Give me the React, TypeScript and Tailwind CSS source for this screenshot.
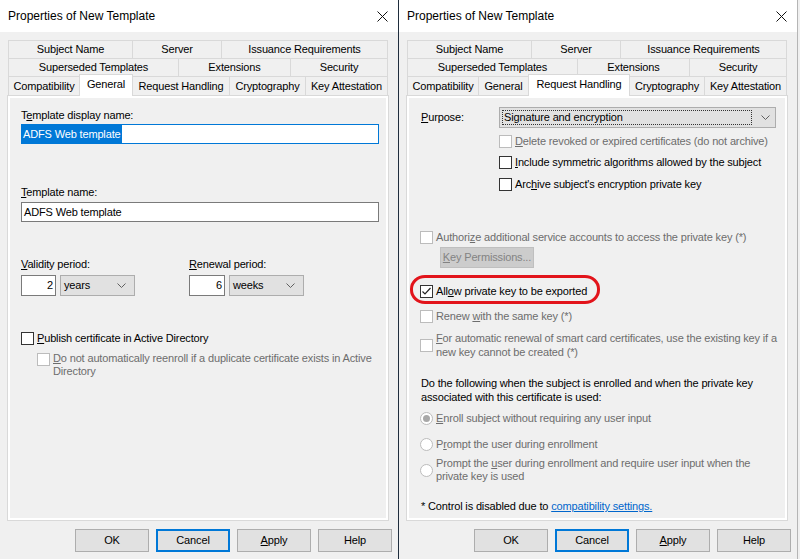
import type { ReactNode } from "react";

type Tab = { label: string; w: string; active?: boolean };

const ROW1: Tab[] = [
  { label: "Subject Name", w: "w-[124px]" },
  { label: "Server", w: "w-[89px]" },
  { label: "Issuance Requirements", w: "w-[167px]" },
];

const ROW2: Tab[] = [
  { label: "Superseded Templates", w: "w-[170px]" },
  { label: "Extensions", w: "w-[112px]" },
  { label: "Security", w: "w-[98px]" },
];

const ROW3_GENERAL: Tab[] = [
  { label: "Compatibility", w: "w-[71px]" },
  { label: "General", w: "w-[54px]", active: true },
  { label: "Request Handling", w: "w-[96px]" },
  { label: "Cryptography", w: "w-[76px]" },
  { label: "Key Attestation", w: "w-[83px]" },
];

const ROW3_REQUEST: Tab[] = [
  { label: "Compatibility", w: "w-[71px]" },
  { label: "General", w: "w-[50px]" },
  { label: "Request Handling", w: "w-[102px]", active: true },
  { label: "Cryptography", w: "w-[74px]" },
  { label: "Key Attestation", w: "w-[83px]" },
];

function TabRow({ tabs, last }: { tabs: Tab[]; last?: boolean }) {
  return (
    <div className={`ml-[8px] flex w-[380px] ${last ? "h-[19px] items-end" : "h-[18px]"}`}>
      {tabs.map((t, i) => {
        const afterActive = i > 0 && tabs[i - 1].active;
        if (t.active) {
          return (
            <div
              key={t.label}
              className={`${t.w} relative z-10 -mb-px flex h-[22px] shrink-0 items-center justify-center border-x border-t border-[#d9d9d9] bg-white pb-[2px]`}
            >
              {t.label}
            </div>
          );
        }
        return (
          <div
            key={t.label}
            className={`${t.w} flex h-full shrink-0 items-center justify-center border-t border-[#d9d9d9] bg-[#f0f0f0] ${
              afterActive ? "" : "border-l"
            } ${i === tabs.length - 1 ? "border-r" : ""}`}
          >
            {t.label}
          </div>
        );
      })}
    </div>
  );
}

function Check({ checked, disabled }: { checked?: boolean; disabled?: boolean }) {
  return (
    <span
      className={`flex h-[13px] w-[13px] shrink-0 items-center justify-center border bg-white ${
        disabled ? "border-[#bcbcbc]" : "border-[#333333]"
      }`}
    >
      {checked && (
        <svg width="11" height="11" viewBox="0 0 11 11">
          <polyline points="1.5,5.5 4,8 9.5,2" fill="none" stroke="#222" strokeWidth="1.2" />
        </svg>
      )}
    </span>
  );
}

function Radio({ checked, disabled }: { checked?: boolean; disabled?: boolean }) {
  return (
    <span
      className={`flex h-[13px] w-[13px] shrink-0 items-center justify-center rounded-full border bg-white ${
        disabled ? "border-[#bcbcbc]" : "border-[#333333]"
      }`}
    >
      {checked && <span className="h-[7px] w-[7px] rounded-full bg-[#a8a8a8]" />}
    </span>
  );
}

function Chevron() {
  return (
    <svg width="9" height="5" viewBox="0 0 9 5" className="shrink-0">
      <polyline points="0.5,0.5 4.5,4.5 8.5,0.5" fill="none" stroke="#606060" strokeWidth="1" />
    </svg>
  );
}

function Dropdown({ value, w }: { value: string; w: string }) {
  return (
    <div className={`${w} flex h-[21px] items-center justify-between border border-[#adadad] bg-[#e1e1e1] pl-[3px] pr-[8px]`}>
      <span>{value}</span>
      <Chevron />
    </div>
  );
}

function Dialog({ tab, children }: { tab: "general" | "request"; children: ReactNode }) {
  return (
    <div className="flex h-full w-[398px] shrink-0 flex-col bg-[#f0f0f0]">
      <div className="flex h-[32px] items-center justify-between bg-white pl-[8px] pr-[10px] text-[12px] tracking-normal">
        <span>Properties of New Template</span>
        <svg width="11" height="11" viewBox="0 0 11 11">
          <path d="M0.5 0.5L10.5 10.5M10.5 0.5L0.5 10.5" stroke="#111" strokeWidth="1" />
        </svg>
      </div>
      <div className="pt-[8px]">
        <TabRow tabs={ROW1} />
        <TabRow tabs={ROW2} />
        <TabRow tabs={tab === "general" ? ROW3_GENERAL : ROW3_REQUEST} last />
        <div className="ml-[7px] h-[426px] w-[382px] border border-[#d9d9d9] bg-white p-[2px]">
          <div className="flex h-full flex-col bg-[#f0f0f0] pl-[11px]">{children}</div>
        </div>
      </div>
      <div className="ml-[75px] mt-[8px] flex gap-[7px]">
        <button className="h-[23px] w-[74px] border border-[#adadad] bg-[#e1e1e1]">OK</button>
        <button className="h-[23px] w-[74px] border-2 border-[#0078d7] bg-[#e1e1e1]">Cancel</button>
        <button className="h-[23px] w-[74px] border border-[#adadad] bg-[#e1e1e1]">
          <u>A</u>pply
        </button>
        <button className="h-[23px] w-[74px] border border-[#adadad] bg-[#e1e1e1]">Help</button>
      </div>
    </div>
  );
}

function GeneralPage() {
  return (
    <>
      <div className="mt-[10px] h-[15px]">
        T<u>e</u>mplate display name:
      </div>
      <div className="mt-[1px] flex h-[20px] w-[358px] items-center border border-[#0078d7] bg-white">
        <span className="flex h-full items-center bg-[#0078d7] px-[1px] text-white">ADFS Web template</span>
      </div>
      <div className="mt-[41px] h-[15px]">
        <u>T</u>emplate name:
      </div>
      <div className="mt-[2px] flex h-[20px] w-[358px] items-center border border-[#7a7a7a] bg-white pl-[2px]">
        ADFS Web template
      </div>
      <div className="mt-[35px] flex">
        <div className="w-[168px]">
          <div className="h-[15px]">
            <u>V</u>alidity period:
          </div>
          <div className="mt-[3px] flex gap-[4px]">
            <div className="flex h-[21px] w-[35px] items-center justify-end border border-[#7a7a7a] bg-white pr-[2px]">2</div>
            <Dropdown value="years" w="w-[75px]" />
          </div>
        </div>
        <div>
          <div className="h-[15px]">
            <u>R</u>enewal period:
          </div>
          <div className="mt-[3px] flex gap-[4px]">
            <div className="flex h-[21px] w-[36px] items-center justify-end border border-[#7a7a7a] bg-white pr-[2px]">6</div>
            <Dropdown value="weeks" w="w-[75px]" />
          </div>
        </div>
      </div>
      <div className="mt-[35px] flex h-[15px] items-center gap-[3px]">
        <Check />
        <span>
          <u>P</u>ublish certificate in Active Directory
        </span>
      </div>
      <div className="ml-[16px] mt-[6px] flex items-start gap-[3px] text-[#6d6d6d]">
        <span className="mt-px">
          <Check disabled />
        </span>
        <span className="leading-[13px]">
          <u>D</u>o not automatically reenroll if a duplicate certificate exists in Active
          <br />
          Directory
        </span>
      </div>
    </>
  );
}

function RequestPage() {
  return (
    <>
      <div className="mt-[9px] flex h-[21px] items-center">
        <span className="w-[79px] pl-px">
          <u>P</u>urpose:
        </span>
        <div className="flex h-[21px] w-[277px] items-center border border-[#adadad] bg-[#e1e1e1] p-[2px] pr-[5px]">
          <span className="flex h-full flex-1 items-center border border-dotted border-[#333] pl-px">
            Signature and encryption
          </span>
          <span className="ml-[9px]">
            <Chevron />
          </span>
        </div>
      </div>
      <div className="ml-[79px] mt-[6px] flex h-[15px] items-center gap-[3px] text-[#6d6d6d]">
        <Check disabled />
        <span>
          <u>D</u>elete revoked or expired certificates (do not archive)
        </span>
      </div>
      <div className="ml-[79px] mt-[6px] flex h-[15px] items-center gap-[3px]">
        <Check />
        <span>
          <u>I</u>nclude symmetric algorithms allowed by the subject
        </span>
      </div>
      <div className="ml-[79px] mt-[7px] flex h-[15px] items-center gap-[3px]">
        <Check />
        <span>
          Arc<u>h</u>ive subject's encryption private key
        </span>
      </div>
      <div className="mt-[38px] flex h-[15px] items-center gap-[3px] text-[#6d6d6d]">
        <Check disabled />
        <span>
          Authori<u>z</u>e additional service accounts to access the private key (*)
        </span>
      </div>
      <div className="ml-[20px] mt-[2px] flex h-[21px] w-[94px] items-center justify-center border border-[#bfbfbf] bg-[#cccccc] text-[#838383]">
        <span>
          <u>K</u>ey Permissions...
        </span>
      </div>
      <div className="relative mt-[16px] flex h-[15px] items-center gap-[3px]">
        <Check checked />
        <span>
          All<u>o</u>w private key to be exported
        </span>
        <span className="pointer-events-none absolute left-[-10px] top-[-9px] h-[29px] w-[190px] rounded-[15px/14px] border-[3px] border-[#e2141b]" />
      </div>
      <div className="mt-[10px] flex h-[15px] items-center gap-[3px] text-[#6d6d6d]">
        <Check disabled />
        <span>
          Renew <u>w</u>ith the same key (*)
        </span>
      </div>
      <div className="mt-[7px] flex items-center gap-[3px] text-[#6d6d6d]">
        <Check disabled />
        <span className="leading-[14px]">
          <u>F</u>or automatic renewal of smart card certificates, use the existing key if a
          <br />
          new key cannot be created (*)
        </span>
      </div>
      <p className="mt-[17px] pl-px leading-[14px]">
        Do the following when the subject is enrolled and when the private key
        <br />
        associated with this certificate is used:
      </p>
      <div className="mt-[7px] flex h-[15px] items-center gap-[3px] text-[#6d6d6d]">
        <Radio checked disabled />
        <span>
          <u>E</u>nroll subject without requiring any user input
        </span>
      </div>
      <div className="mt-[11px] flex h-[15px] items-center gap-[3px] text-[#6d6d6d]">
        <Radio disabled />
        <span>
          P<u>r</u>ompt the user during enrollment
        </span>
      </div>
      <div className="mt-[5px] flex items-center gap-[3px] text-[#6d6d6d]">
        <Radio disabled />
        <span className="leading-[13px]">
          Prompt the <u>u</u>ser during enrollment and require user input when the
          <br />
          private key is used
        </span>
      </div>
      <div className="mt-[16px] h-[15px] pl-px">
        * Control is disabled due to <span className="text-[#0066cc] underline">compatibility settings.</span>
      </div>
    </>
  );
}

export default function App() {
  return (
    <div className="flex h-[559px] w-[800px] overflow-hidden whitespace-nowrap bg-[#f0f0f0] font-['Liberation_Sans',Arial,sans-serif] text-[11px] leading-[15px] tracking-[-0.15px] text-black">
      <Dialog tab="general">
        <GeneralPage />
      </Dialog>
      <div className="h-full w-px shrink-0 bg-[#1f2d3d]" />
      <div className="flex h-full border-r border-[#b5b5b5]">
        <Dialog tab="request">
          <RequestPage />
        </Dialog>
      </div>
    </div>
  );
}
